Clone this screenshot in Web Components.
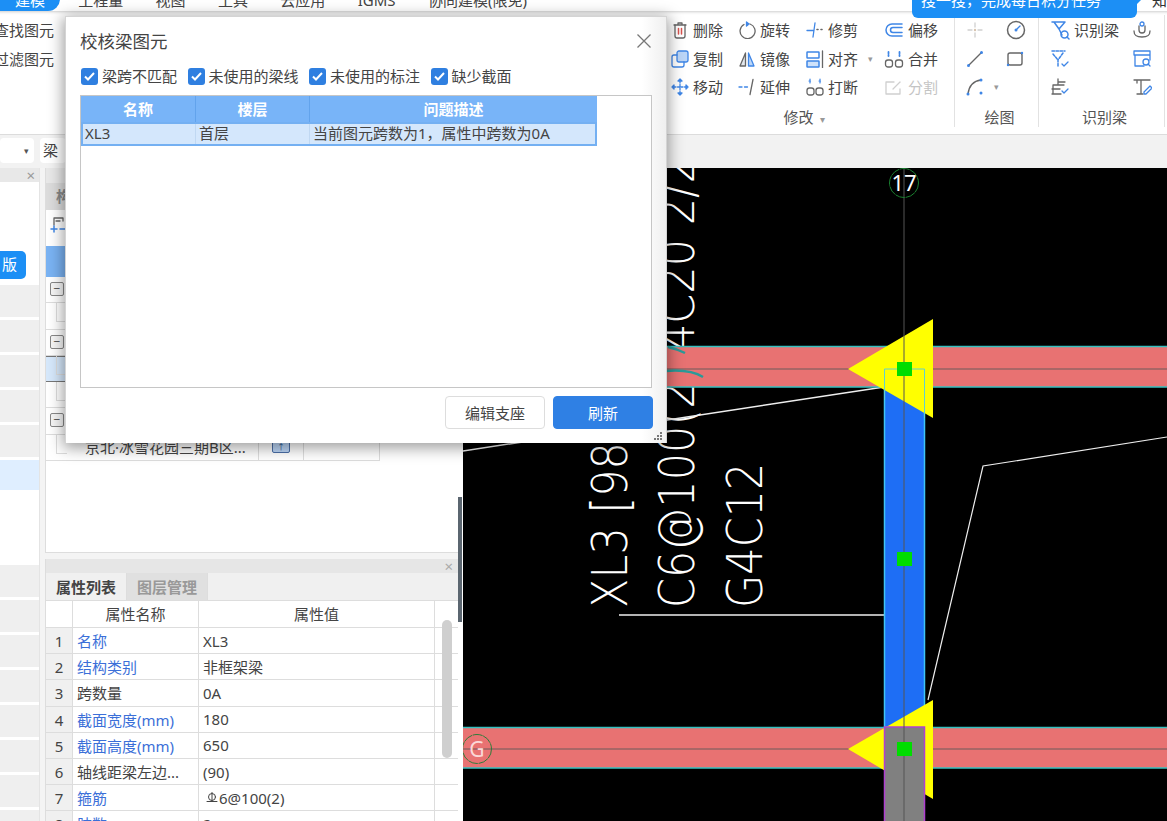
<!DOCTYPE html>
<html lang="zh">
<head>
<meta charset="utf-8">
<title>校核梁图元</title>
<style>
html,body{margin:0;padding:0;width:1167px;height:821px;overflow:hidden;background:#f4f4f4;
font:15px/20px "Noto Sans","Noto Sans CJK SC",sans-serif;color:#444}
</style>
</head>
<body>
<app-shell></app-shell>
<script>
const B='#3f86e6',G='#666';
const svg=(w,h,b)=>`<svg width="${w}" height="${h}" viewBox="0 0 ${w} ${h}" fill="none" stroke-linecap="round" stroke-linejoin="round" stroke-width="1.3" style="display:block;flex:none">${b}</svg>`;
const ICONS={
del:svg(18,18,`<path d="M3 4h12M7 4V2h4v2" stroke="${G}"/><path d="M4 4v11a2 2 0 0 0 2 2h6a2 2 0 0 0 2-2V4" stroke="${G}"/><path d="M7.500 7.500v5.500M10.500 7.500v5.500" stroke="#d9534f" stroke-width="1.500"/>`),
rot:svg(18,18,`<path d="M6 3.500A7.500 7.500 0 1 0 12 3" stroke="${G}"/><path d="M8.500 1l2.500 2-2.500 2z" fill="${B}" stroke="${B}"/>`),
trim:svg(18,18,`<path d="M9 2 7 16M1 9.500h6" stroke="${B}"/><path d="M11 8.500h1M15 8.500h1" stroke="${G}" stroke-width="1.600"/>`),
off:svg(20,18,`<path d="M18 3H8a6 6 0 0 0 0 12h10" stroke="${B}" stroke-width="1.500"/><path d="M18 6.500H9a2.500 2.500 0 0 0 0 5h9" stroke="${B}" stroke-width="1.500"/>`),
copy:svg(18,18,`<rect x="6" y="1" width="11" height="11" rx="2" fill="#bcd6f7" stroke="${B}"/><path d="M6 5H3a2 2 0 0 0-2 2v8a2 2 0 0 0 2 2h8a2 2 0 0 0 2-2v-3" stroke="${B}"/>`),
mir:svg(18,18,`<path d="M7.500 3 2 16h5.500z" stroke="${G}" fill="#e3e8ee"/><path d="M10.500 3 16 16h-5.500z" stroke="${B}" fill="#bcd6f7"/>`),
ali:svg(18,18,`<rect x="1" y="2" width="12" height="6" rx=".5" stroke="${B}" stroke-width="1.500"/><rect x="1" y="11" width="12" height="6" rx=".5" fill="#cfe2fa" stroke="${B}" stroke-width="1.500"/><path d="M16.500 1v17" stroke="${G}"/>`),
mer:svg(20,18,`<path d="M4.500 2v4M15.500 2v4" stroke="${B}" stroke-width="1.800" stroke-dasharray="1.500 1.500"/><rect x="1.500" y="10" width="7" height="7" rx="2.500" stroke="${G}"/><rect x="11.500" y="10" width="7" height="7" rx="2.500" stroke="${G}"/>`),
mov:svg(18,18,`<path d="M9 3v12M3 9h12" stroke="${B}" stroke-dasharray="2 1.500"/><path d="m7 3 2-2 2 2zM7 15l2 2 2-2zM3 7 1 9l2 2zM15 7l2 2-2 2z" fill="${B}" stroke="${B}"/>`),
ext:svg(18,18,`<path d="M1 9h3M6.500 9h3" stroke="${B}"/><path d="M15 1.500 12 16.500" stroke="${G}"/>`),
brk:svg(18,18,`<path d="M3 3h2M13 3h2M4 1v4M14 1v4" stroke="${B}" stroke-width="1.200" stroke-dasharray="1.500 1.200"/><rect x="1" y="10" width="7" height="7" rx="2.500" stroke="${G}"/><rect x="10" y="10" width="7" height="7" rx="2.500" stroke="${G}"/>`),
spl:svg(20,18,`<path d="M10 4H2v12h14v-5" stroke="#cfcfcf"/><path d="m9 11 7-7" stroke="#cfcfcf"/>`),
cross:svg(18,18,`<path d="M9 2v4M9 12v4M2 9h4M12 9h4" stroke="#d0d0d0"/><circle cx="9" cy="9" r="1.200" fill="#d8c4b0" stroke="none"/>`),
circ:svg(20,20,`<circle cx="10" cy="10" r="8.500" stroke="${G}" stroke-width="1.500"/><path d="m10 10 4-4" stroke="${B}"/><circle cx="10" cy="10" r="1.500" fill="${B}" stroke="none"/>`),
line:svg(18,18,`<path d="M2.500 15.500 15.500 2.500" stroke="${G}" stroke-width="1.400"/><circle cx="2.500" cy="15.500" r="1.500" fill="${B}" stroke="none"/><circle cx="15.500" cy="2.500" r="1.500" fill="${B}" stroke="none"/>`),
rect:svg(18,18,`<rect x="2" y="3" width="14" height="12" rx="2" stroke="${G}" stroke-width="1.400"/><circle cx="16" cy="3" r="1.200" fill="${B}" stroke="none"/><circle cx="2" cy="15" r="1.200" fill="${B}" stroke="none"/>`),
arc:svg(18,18,`<path d="M2 16C3 8 7 3 15 2" stroke="${G}" stroke-width="1.400"/><circle cx="2" cy="16" r="1.500" fill="${B}" stroke="none"/><circle cx="15" cy="2" r="1.500" fill="${B}" stroke="none"/><circle cx="15" cy="15" r="1.500" fill="${B}" stroke="none"/>`),
rb1:svg(20,20,`<path d="M2 2h13L9 9 4 2M9 9l3 6" stroke="${B}" stroke-width="1.500"/><circle cx="14.500" cy="14.500" r="3.500" stroke="${B}" stroke-width="1.500"/><path d="m17 17 2 2" stroke="${B}" stroke-width="1.500"/>`),
rb2:svg(20,20,`<path d="M2 2h13M3 5l5 6M13 4l-5 7v6" stroke="${B}" stroke-width="1.500" stroke-dasharray="2.500 1.500"/><path d="m12 15 2 2 4-4" stroke="${B}"/>`),
rb3:svg(20,20,`<path d="M8 2v6M8 5h7M3 8h11M2 12h8M2 17h9M3 8v9" stroke="${G}"/><path d="m12 14 2 2 4-4" stroke="${B}"/>`),
rb4:svg(20,20,`<path d="M7 6v4a3 3 0 0 0 6 0V6" stroke="${G}"/><path d="M2 11c0 5 3 6 8 6s8-1 8-6" stroke="${G}"/><circle cx="10" cy="4" r="2" stroke="${B}"/>`),
rb5:svg(20,20,`<path d="M2 2h16v4H2zM3 6v11h9M18 6v5" stroke="${B}"/><circle cx="14" cy="13" r="3" stroke="${B}"/><path d="m16 15 2 2" stroke="${B}"/>`),
rb6:svg(20,20,`<path d="M2 3h16M9 3v14M5 3v3M5 17h6" stroke="${G}"/><path d="m12 15 6-6 2 2-6 6h-2z" stroke="${B}"/>`),
sel:svg(16,18,`<path d="M4 9V2h9v3M6 5h4" stroke="${G}"/><path d="M1 13h6M4 10v6M10 13h5" stroke="${B}" stroke-width="1.500"/>`),
rebar:svg(12,12,`<circle cx="6" cy="5" r="3.500" stroke="#444" stroke-width="1"/><path d="M6 .5v8M1 9.500h10" stroke="#444" stroke-width="1"/>`)
};
function def(name,css,html){
  customElements.define(name,class extends HTMLElement{
    constructor(){super();this.attachShadow({mode:'open'})}
    connectedCallback(){
      if(this._done)return;this._done=1;
      const h=typeof html==='function'?html(this):html;
      this.shadowRoot.innerHTML=`<style>${css}</style>${h}`;
    }
  });
}

def('top-tabs',`:host{display:block;height:11px;overflow:hidden;background:#fff}
.r{display:flex;margin-top:-11px;height:22px;line-height:22px;color:#444}
span{padding:0 16.2px;white-space:nowrap}
.on{padding:0 15px;background:#1c8ff5;color:#fff;border-radius:0 0 12px 0;width:30px;margin-right:2px}`,
`<div class="r"><span class="on">建模</span><span>工程量</span><span>视图</span><span>工具</span><span>云应用</span><span>IGMS</span><span>协同建模(限免)</span></div>`);

def('tip-bubble',`:host{position:absolute;left:912px;top:0;width:225px;height:18px;background:#1c8ff5;border-radius:0 0 6px 6px;overflow:visible;color:#fff;z-index:3}
.t{position:absolute;left:9px;top:-10px;line-height:20px;white-space:nowrap}
.p{position:absolute;right:-4px;top:0;border-left:5px solid #1c8ff5;border-bottom:5px solid transparent}
.k{position:absolute;left:240px;top:-10px;line-height:20px;color:#333}`,
`<div class="t">搜一搜，完成每日积分任务</div><div class="p"></div><div class="k">知</div>`);

def('rib-tool',`:host{display:flex;align-items:center;gap:4px;height:28.5px;white-space:nowrap;color:#444;line-height:20px}
:host([off]){color:#c4c4c4}.c{color:#999;font-size:9px;margin-left:6px}`,
h=>`${ICONS[h.getAttribute('i')]||''}<slot></slot>${h.hasAttribute('menu')?'<span class="c">▾</span>':''}`);

def('rib-group',`:host{display:flex;flex-direction:column;box-sizing:border-box;padding-top:1px;border-right:1px solid #e2e2e2;height:112px;margin-top:4px;flex:none}
.g{display:grid;flex:1;grid-auto-rows:28.5px;align-content:start}
.l{text-align:center;color:#555;height:22px;line-height:24px}
.l i{font-style:normal;color:#999;font-size:10px;margin-left:6px}`,
h=>`<div class="g" style="grid-template-columns:${h.getAttribute('cols')};padding-left:${h.getAttribute('pl')||0}px"><slot></slot></div><div class="l" style="${h.getAttribute('ls')||''}">${h.getAttribute('label')}${h.hasAttribute('menu')?'<i>▾</i>':''}</div>`);

def('rib-bar',`:host{display:flex;height:124px;box-sizing:border-box;padding-right:2px;background:#fff;border-bottom:1px solid #dcdcdc;box-shadow:inset 0 4px 3px -3px #ccc}
.f{width:54px;flex:none;padding-top:5px}
.f div{display:flex;justify-content:flex-end;height:28.5px;line-height:28px;white-space:nowrap}
.s{flex:1}`,
`<div class="f"><div>查找图元</div><div>过滤图元</div></div><div class="s"></div>
<rib-group label="修改" menu ls="padding-right:14px" cols="67px 68px 78px 74px" pl="3" style="width:287px">
<rib-tool i="del">删除</rib-tool><rib-tool i="rot">旋转</rib-tool><rib-tool i="trim">修剪</rib-tool><rib-tool i="off">偏移</rib-tool>
<rib-tool i="copy">复制</rib-tool><rib-tool i="mir">镜像</rib-tool><rib-tool i="ali" menu>对齐</rib-tool><rib-tool i="mer">合并</rib-tool>
<rib-tool i="mov">移动</rib-tool><rib-tool i="ext">延伸</rib-tool><rib-tool i="brk">打断</rib-tool><rib-tool i="spl" off>分割</rib-tool></rib-group>
<rib-group label="绘图" ls="padding-left:6px" cols="40px 40px" pl="11" style="width:84px">
<rib-tool i="cross"></rib-tool><rib-tool i="circ"></rib-tool><rib-tool i="line"></rib-tool><rib-tool i="rect"></rib-tool><rib-tool i="arc" menu></rib-tool></rib-group>
<rib-group label="识别梁" ls="padding-left:6px" cols="82px 30px" pl="11" style="width:126px">
<rib-tool i="rb1">识别梁</rib-tool><rib-tool i="rb4"></rib-tool><rib-tool i="rb2"></rib-tool><rib-tool i="rb5"></rib-tool><rib-tool i="rb3"></rib-tool><rib-tool i="rb6"></rib-tool></rib-group>`);

def('tool-strip',`:host{display:flex;gap:6px;height:33px;box-sizing:border-box;padding-top:3px;background:#f2f2f2}
.b{height:25px;background:#fff;border-radius:4px;line-height:25px;box-sizing:border-box}
.a{width:34px;color:#555;font-size:9px;text-align:right;padding-right:5px}
.c{width:26px;padding-left:3px}`,
`<div class="b a">▾</div><div class="b c">梁</div>`);

def('side-strip',`:host{display:flex;flex-direction:column;width:40px;flex:none;background:#fff;border-right:1px solid #e4e4e4;box-sizing:border-box;overflow:hidden}
.h{height:14px;background:#e8e8e8;color:#999;font-size:15px;line-height:14px;text-align:right;padding-right:4px;flex:none}
.w{height:69px;background:#fff;flex:none}
.btn{height:28px;width:26px;background:#1c8ff5;color:#fff;border-radius:0 5px 5px 0;line-height:27px;text-align:right;padding-right:9px;box-sizing:border-box;flex:none;white-space:nowrap}
.g{background:#efefef;flex:none;margin-bottom:3px;height:32px}
.sel{height:30px;background:#dfeeff;flex:none}`,
`<div class="h">×</div><div class="w"></div><div class="btn">版</div><div style="height:6px;flex:none"></div>
<div class="g"></div><div class="g"></div><div class="g"></div><div class="g"></div><div class="g"></div>
<div class="sel"></div><div style="height:75px;flex:none"></div>
<div class="g"></div><div class="g"></div><div class="g"></div><div class="g"></div><div class="g"></div><div class="g"></div><div class="g"></div><div class="g"></div>`);

def('tree-row',`:host{display:grid;grid-template-columns:213px 45px 76px;width:334px;height:26.3px;box-sizing:border-box;position:relative}
div{border-right:1px solid #ddd;border-bottom:1px solid #ddd;box-sizing:border-box;line-height:25px;white-space:nowrap;overflow:hidden;color:#444}
:host([sel]) div{background:#d6e8fb;border-top:1px solid #777;border-bottom:1px solid #777}
.n{padding-left:39px}
.m{position:absolute;left:4px;top:5px;width:14px;height:14px;border:1px solid #888;border-radius:2px;background:#f6f6f6;line-height:12px;text-align:center;font-size:12px;box-sizing:border-box;color:#555}
.v{position:absolute;left:10px;top:0;width:10px;height:18px;border-left:1px solid #ddd;border-bottom:1px solid #ddd}
.i{display:flex;align-items:center;justify-content:center}
.u{width:16px;height:10px;border:1px solid #4b6fa8;background:#bcd6f7;border-radius:2px;color:#28558f;font-size:8px;line-height:10px;text-align:center;overflow:hidden;display:block}`,
h=>`<div class="n"><slot></slot></div><div class="i">${h.hasAttribute('up')?'<span class="u">↑</span>':''}</div><div></div>${h.hasAttribute('minus')?'<span class="m">−</span>':'<span class="v"></span>'}`);

def('tree-panel',`:host{display:block;height:385px;box-sizing:border-box;background:#fff;border-bottom:1px solid #ddd;border-left:1px solid #ddd;flex:none}
.h{height:15px;background:#e8e8e8}
.t{height:27px;background:#f0f0f0}
.t span{display:inline-block;width:80px;height:27px;background:#dcdcdc;text-align:center;line-height:27px;color:#888;font-weight:600}
.b{height:36px;padding:6px 4px;box-sizing:border-box}
.c{height:31px;background:#7ab3f3;width:334px}`,
`<div class="h"></div><div class="t"><span>构件列表</span></div><div class="b">${ICONS.sel}</div><div class="c"></div>
<tree-row minus></tree-row><tree-row></tree-row><tree-row minus></tree-row><tree-row sel></tree-row><tree-row></tree-row><tree-row minus></tree-row><tree-row up>京北·冰雪花园三期B区...</tree-row>`);

def('prop-row',`:host{display:grid;grid-template-columns:27px 126px 236px;height:26.2px;box-sizing:border-box;border-bottom:1px solid #ddd;line-height:26px;color:#444}
div{box-sizing:border-box;border-right:1px solid #ddd;padding-left:4px;white-space:nowrap;overflow:hidden}
.n{background:#f0f0f0;text-align:center;padding:0}
:host([link]) .k{color:#3b6fd8}
.val{padding-left:4px;display:flex;align-items:center;gap:1px}`,
h=>`<div class="n">${h.getAttribute('n')}</div><div class="k">${h.getAttribute('k')}</div><div class="val"><slot></slot></div>`);

def('prop-panel',`:host{display:block;flex:1;background:#fff;border-left:1px solid #ddd;position:relative;margin-top:6px;overflow:hidden}
.h{height:14px;background:#e6e6e6;color:#aaa;font-size:15px;line-height:14px;text-align:right;padding-right:5px}
.t{height:28px;background:#f0f0f0;display:flex;border-bottom:1px solid #ddd;box-sizing:border-box}
.t span{width:81px;text-align:center;line-height:28px;font-weight:600;color:#444;border-right:1px solid #ddd;box-sizing:border-box}
.t span+span{background:#e0e0e0;color:#999}
.hd{display:grid;grid-template-columns:27px 126px 236px;height:27px;border-bottom:1px solid #ddd;box-sizing:border-box;line-height:27px;text-align:center;color:#444}
.hd i{font-style:normal;border-right:1px solid #ddd}
.sb{position:absolute;left:396px;top:61px;width:10px;height:138px;border-radius:5px;background:#cfcfcf}`,
`<div class="h">×</div><div class="t"><span>属性列表</span><span>图层管理</span></div>
<div class="hd"><i></i><i>属性名称</i><i>属性值</i></div>
<prop-row n="1" k="名称" link>XL3</prop-row><prop-row n="2" k="结构类别" link>非框架梁</prop-row><prop-row n="3" k="跨数量">0A</prop-row>
<prop-row n="4" k="截面宽度(mm)" link>180</prop-row><prop-row n="5" k="截面高度(mm)" link>650</prop-row><prop-row n="6" k="轴线距梁左边...">(90)</prop-row>
<prop-row n="7" k="箍筋" link><span style="margin-left:3px;display:block">${ICONS.rebar}</span><span>6@100(2)</span></prop-row><prop-row n="8" k="肢数" link>2</prop-row><div class="sb"></div>`);

def('cad-canvas',`:host{display:block;flex:1;background:#000;overflow:hidden}
svg{display:block}text{font-family:"DejaVu Sans",sans-serif;fill:#fff}
.t{font-weight:200}`,
`<svg width="704" height="653" viewBox="463 168 704 653">
<text class="t" transform="translate(627,608) rotate(-90) scale(1,1.17)" font-size="43">XL3 [98</text>
<text class="t" transform="translate(694,608) rotate(-90) scale(1,1.17)" font-size="43">C6@100(2) 4C20 2/2</text>
<text class="t" transform="translate(762,608) rotate(-90) scale(1,1.17)" font-size="43">G4C12</text>
<path d="M463 451 884 387M619 615H884" stroke="#eee" stroke-width="1.500" fill="none"/>
<path d="M1167 437 983 466 928 700" stroke="#eee" stroke-width="1.200" fill="none"/>
<g>
<rect x="463" y="346" width="704" height="41" fill="#e87272"/><path d="M463 346.500H1167M463 387H1167" stroke="#36c0c0" stroke-width="1.500"/>
<rect x="463" y="727" width="704" height="41" fill="#e87272"/><path d="M463 727.500H1167M463 768H1167" stroke="#36c0c0" stroke-width="1.500"/>
<path d="M463 369H1167M463 749H1167" stroke="#6a5a5a"/>
<path d="M668 347q9 2 17 6M666 371q24 -2 37 6" stroke="#2a9a98" stroke-width="2.500" fill="none"/>
</g>
<rect x="884.500" y="369" width="40" height="358" fill="#1e6ef5" stroke="#3fc4f5" stroke-width="1.500"/>
<path d="M848 369 933 319V418Z" fill="#ff0"/>
<path d="M884.500 400V369H924.500V418" stroke="#60d0d0" fill="none"/>
<path d="M848 749 933 700V799Z" fill="#ff0"/>
<rect x="884.500" y="727" width="40" height="100" fill="#808080" stroke="#b040d0" stroke-width="1.500"/>
<path d="M904 168V821" stroke="#555" fill="none"/>
<rect x="897" y="362" width="15" height="14" fill="#0d0"/><rect x="897" y="552" width="15" height="14" fill="#0d0"/><rect x="897" y="742" width="15" height="14" fill="#0d0"/>
<circle cx="904" cy="183" r="14.500" fill="none" stroke="#1a8030" stroke-dasharray="10 .6"/>
<circle cx="477" cy="749" r="14.500" fill="none" stroke="#2e7d3a" stroke-dasharray="10 .6"/>
<text x="904" y="191" text-anchor="middle" style='font-family:"Noto Sans",sans-serif' font-size="22">17</text>
<text x="477" y="757" text-anchor="middle" style='font-family:"Noto Sans",sans-serif;fill:#fbd9d9' font-size="21">G</text>
</svg>`);

def('app-check',`:host{display:flex;align-items:center;gap:4px;color:#444;white-space:nowrap;height:17px;line-height:17px}
b{width:17px;height:17px;background:#2f7fe0;border-radius:3px;display:flex;align-items:center;justify-content:center;flex:none}`,
`<b><svg width="13" height="11" viewBox="0 0 13 11" fill="none"><path d="M2 5.500 5 8.500 11 2" stroke="#fff" stroke-width="2"/></svg></b><slot></slot>`);

def('check-dialog',`:host{position:absolute;left:65px;top:16px;width:602px;height:427px;box-sizing:border-box;z-index:5;display:flex;flex-direction:column;
padding:0 13px 0 14px;background:linear-gradient(90deg,#fff 96%,#efefef 100%);border:1px solid #d4d4d4;border-width:1px 1px 0 1px;box-shadow:0 3px 14px 2px rgba(0,0,0,.38)}
.ti{height:48px;padding-bottom:3px;display:flex;justify-content:space-between;align-items:center;font-size:17.5px;color:#444;flex:none}
.x{margin-right:1px;flex:none}
.ck{display:flex;gap:10.5px;padding-left:1px;flex:none}
.fr{margin-top:10px;height:293px;width:572px;border:1px solid #c6c6c6;box-sizing:border-box;background:#fff;flex:none}
.row{display:grid;grid-template-columns:114px 114px 288px;width:516px;box-sizing:border-box}
.hd{height:26px;background:#78b4f8;color:#fff;text-align:center;line-height:26px;font-weight:600}
.hd span+span{border-left:1px solid #62a3ec}
.bd{height:24px;background:#d4e7fc;border:2px solid #74b0f2;line-height:19px;grid-template-columns:112px 114px 286px;color:#444}
.bd span{padding-left:2px;white-space:nowrap}.bd span+span{border-left:1px solid #c0d8f2;padding-left:3px}
.ft{display:flex;justify-content:flex-end;gap:8px;margin-top:8px;flex:none}
button{width:100px;height:33px;font:inherit;border-radius:4px;border:1px solid #ddd;background:#fff;color:#444;padding:0;box-sizing:border-box}
button.p{background:#2f80e4;border-color:#2f80e4;color:#fff}
.g{position:absolute;right:3px;bottom:2px}`,
`<div class="ti"><span>校核梁图元</span><svg class="x" width="16" height="16" viewBox="0 0 16 16"><path d="M1.500 1.500l13 13M14.500 1.500l-13 13" stroke="#777" stroke-width="1.300"/></svg></div>
<div class="ck"><app-check>梁跨不匹配</app-check><app-check>未使用的梁线</app-check><app-check>未使用的标注</app-check><app-check>缺少截面</app-check></div>
<div class="fr"><div class="row hd"><span>名称</span><span>楼层</span><span>问题描述</span></div>
<div class="row bd"><span>XL3</span><span>首层</span><span>当前图元跨数为1，属性中跨数为0A</span></div></div>
<div class="ft"><button>编辑支座</button><button class="p">刷新</button></div>
<svg class="g" width="10" height="10" viewBox="0 0 10 10" fill="#777"><rect x="7" y="1" width="2" height="2"/><rect x="4" y="4" width="2" height="2"/><rect x="7" y="4" width="2" height="2"/><rect x="1" y="7" width="2" height="2"/><rect x="4" y="7" width="2" height="2"/><rect x="7" y="7" width="2" height="2"/></svg>`);

def('app-shell',`:host{display:flex;flex-direction:column;width:1167px;height:821px;position:relative;overflow:hidden}
.m{display:flex;flex:1;min-height:0}
.c{display:flex;flex-direction:column;width:413px;flex:none;margin-left:5px;background:#f4f4f4}
.s{width:5px;flex:none;background:#fff;position:relative}
.s i{position:absolute;left:0;top:329px;width:4px;height:125px;background:#5b6670}`,
`<top-tabs></top-tabs><tip-bubble></tip-bubble><rib-bar></rib-bar><tool-strip></tool-strip>
<div class="m"><side-strip></side-strip><div class="c"><tree-panel></tree-panel><prop-panel></prop-panel></div><div class="s"><i></i></div><cad-canvas></cad-canvas></div>
<check-dialog></check-dialog>`);
</script>
</body>
</html>
